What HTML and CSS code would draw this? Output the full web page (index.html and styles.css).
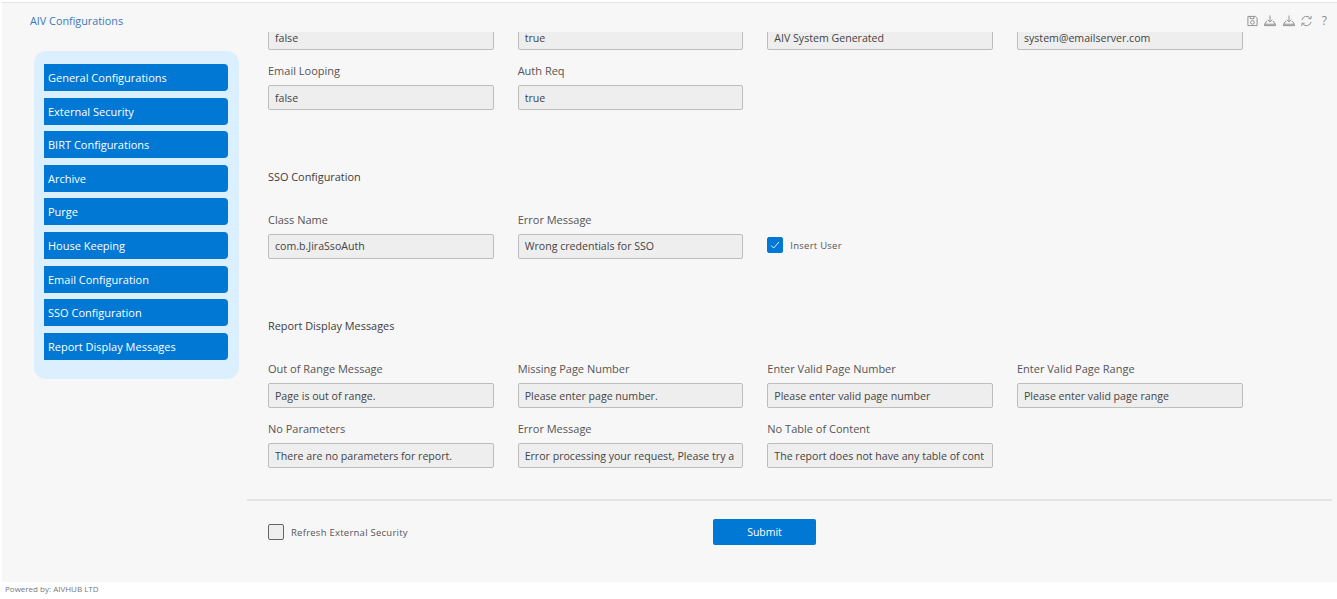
FILE: index.html
```html
<!DOCTYPE html>
<html lang="en">
<head>
<meta charset="utf-8">
<title>AIV Configurations</title>
<link rel="stylesheet" href="styles.css">
</head>
<body>
<div class="app">
  <header class="topbar">
    <h1 class="title">AIV Configurations</h1>
    <div class="tools">
      <svg class="tool" viewBox="0 0 12 12"><path d="M1 1h8l2 2v8H1z M3.500 1v2.500h4V1"/><circle cx="6" cy="7.500" r="2"/></svg>
      <svg class="tool wide" viewBox="0 0 13 12"><path d="M6.500 0v7M4 4.500l2.500 2.500L9 4.500M3.500 6.500H2.500L.5 10v1h12v-1l-2-3.500H9.500M.5 9.500h12"/></svg>
      <svg class="tool wide" viewBox="0 0 13 12"><path d="M6.500 0v7M4 4.500l2.500 2.500L9 4.500M3.500 6.500H2.500L.5 10v1h12v-1l-2-3.500H9.500M.5 9.500h12"/></svg>
      <svg class="tool" viewBox="0 0 12 12"><path d="M1 5A5 5 0 0 1 10 3M11 .5V3.500H8M11 7A5 5 0 0 1 2 9M1 11.500V8.500H4"/></svg>
      <span class="help">?</span>
    </div>
  </header>
  <div class="layout">
    <nav class="sidebar">
      <a class="nav-item">General Configurations</a>
      <a class="nav-item">External Security</a>
      <a class="nav-item">BIRT Configurations</a>
      <a class="nav-item">Archive</a>
      <a class="nav-item">Purge</a>
      <a class="nav-item">House Keeping</a>
      <a class="nav-item">Email Configuration</a>
      <a class="nav-item">SSO Configuration</a>
      <a class="nav-item">Report Display Messages</a>
    </nav>
    <main class="main">
      <div class="viewport">
        <section class="grid">
          <div class="field"><input class="input" value="false" disabled></div>
          <div class="field"><input class="input" value="true" disabled></div>
          <div class="field"><input class="input" value="AIV System Generated" disabled></div>
          <div class="field"><input class="input" value="system@emailserver.com" disabled></div>
          <div class="field"><label class="label">Email Looping</label><input class="input" value="false" disabled></div>
          <div class="field"><label class="label">Auth Req</label><input class="input" value="true" disabled></div>
        </section>
        <h2 class="heading sso">SSO Configuration</h2>
        <section class="grid">
          <div class="field"><label class="label">Class Name</label><input class="input" value="com.b.JiraSsoAuth" disabled></div>
          <div class="field"><label class="label">Error Message</label><input class="input" value="Wrong credentials for SSO" disabled></div>
          <div class="check-row insert">
            <span class="box checked"><svg viewBox="0 0 16 16"><path d="M3.500 8.500l3 3 6-7"/></svg></span>
            <span class="check-label">Insert User</span>
          </div>
        </section>
        <h2 class="heading">Report Display Messages</h2>
        <section class="grid">
          <div class="field"><label class="label">Out of Range Message</label><input class="input" value="Page is out of range." disabled></div>
          <div class="field"><label class="label">Missing Page Number</label><input class="input" value="Please enter page number." disabled></div>
          <div class="field"><label class="label">Enter Valid Page Number</label><input class="input" value="Please enter valid page number" disabled></div>
          <div class="field"><label class="label">Enter Valid Page Range</label><input class="input" value="Please enter valid page range" disabled></div>
          <div class="field"><label class="label">No Parameters</label><input class="input" value="There are no parameters for report." disabled></div>
          <div class="field"><label class="label">Error Message</label><input class="input" value="Error processing your request, Please try again" disabled></div>
          <div class="field"><label class="label">No Table of Content</label><input class="input" value="The report does not have any table of content" disabled></div>
        </section>
      </div>
      <div class="actions">
        <div class="check-row">
          <span class="box"></span>
          <span class="check-label">Refresh External Security</span>
        </div>
        <button class="submit" type="button">Submit</button>
      </div>
    </main>
  </div>
</div>
<footer class="footer">Powered by: AIVHUB LTD</footer>
</body>
</html>
```

FILE: styles.css
```css
* { box-sizing: border-box; }
html, body { margin: 0; height: 100%; }
body {
  background: #fff;
  font-family: "Open Sans", "Noto Sans", sans-serif;
  color: #444;
  overflow: hidden;
}
.app {
  margin: 2px 0 0 2px;
  height: 580px;
  background: #f7f7f7;
  border-top: 1px solid #e6e6e6;
  display: flex;
  flex-direction: column;
}
.topbar {
  height: 29px;
  flex: none;
  display: flex;
  justify-content: space-between;
  padding: 0 10px 0 28px;
}
.title {
  margin: 0;
  padding-top: 11px;
  font-size: 10.800px;
  line-height: 14px;
  font-weight: 500;
  color: #3a78bd;
}
.tools {
  display: flex;
  align-items: flex-start;
  gap: 6.500px;
  padding-top: 12px;
}
.tool {
  width: 11px;
  height: 12px;
  fill: none;
  stroke: #8b8b8b;
  stroke-width: 1;
}
.tool.wide { width: 12px; }
.help {
  margin-left: 3px;
  font-size: 12px;
  line-height: 12px;
  color: #8b8b8b;
}
.layout {
  flex: 1;
  display: flex;
  min-height: 0;
}
.sidebar {
  flex: none;
  width: 205px;
  height: 328px;
  margin: 19px 0 0 32px;
  padding: 13px 11px 0 10px;
  background: #dcefff;
  border-radius: 12px;
  display: flex;
  flex-direction: column;
  gap: 6.600px;
}
.nav-item {
  height: 27px;
  flex: none;
  padding: 1px 0 0 4px;
  background: #0078d4;
  color: #fff;
  font-size: 11px;
  font-weight: 500;
  line-height: 26px;
  border-radius: 0 4px 4px 0;
}
.main {
  flex: 1;
  min-width: 0;
  margin-left: 8px;
  margin-right: 5px;
  display: flex;
  flex-direction: column;
}
.viewport {
  height: 469px;
  flex: none;
  padding: 0 87px 31px 21px;
  overflow: hidden;
  display: flex;
  flex-direction: column;
  justify-content: flex-end;
  border-bottom: 2px solid #e4e4e4;
}
.grid {
  flex: none;
  display: grid;
  grid-template-columns: repeat(4, 225.670px);
  column-gap: 24px;
  row-gap: 13px;
}
.field {
  display: flex;
  flex-direction: column;
}
.label {
  height: 15px;
  margin-bottom: 7px;
  font-size: 11px;
  line-height: 15px;
  color: #555;
}
.input {
  width: 100%;
  height: 25px;
  padding: 0 8px 0 6px;
  font: 10.600px "Open Sans", "Noto Sans", sans-serif;
  color: #444;
  background: #eeeeee;
  border: 1px solid #bdbdbd;
  border-radius: 2px;
  opacity: 1;
  -webkit-text-fill-color: #444;
}
.heading {
  flex: none;
  margin: 59.500px 0 28px;
  font-size: 10.900px;
  font-weight: 500;
  line-height: 15px;
  color: #3c3c3c;
}
.heading.sso { margin-top: 58.500px; }
.check-row {
  display: flex;
  align-items: center;
  gap: 7px;
}
.insert { align-self: end; height: 25px; padding-bottom: 2px; }
.box {
  width: 16px;
  height: 16px;
  flex: none;
  border: 1px solid #666;
  border-radius: 2px;
  background: #eee;
}
.box.checked {
  background: #0078d4;
  border-color: #0078d4;
  display: flex;
}
.box svg {
  fill: none;
  stroke: #fff;
  stroke-width: 1;
}
.check-label {
  padding-top: 2px;
  font-size: 9.500px;
  line-height: 14px;
  letter-spacing: .25px;
  color: #555;
}
.actions {
  flex: none;
  display: flex;
  align-items: center;
  padding: 18px 0 0 21px;
}
.actions .check-row { width: 445px; }
.submit {
  width: 103px;
  height: 26px;
  padding: 0;
  border: 0;
  border-radius: 2px;
  background: #0078d4;
  color: #fff;
  font: 500 10.500px "Open Sans", "Noto Sans", sans-serif;
}
.footer {
  height: 17px;
  padding-left: 5px;
  font-size: 8px;
  line-height: 14px;
  color: #777;
}
```
